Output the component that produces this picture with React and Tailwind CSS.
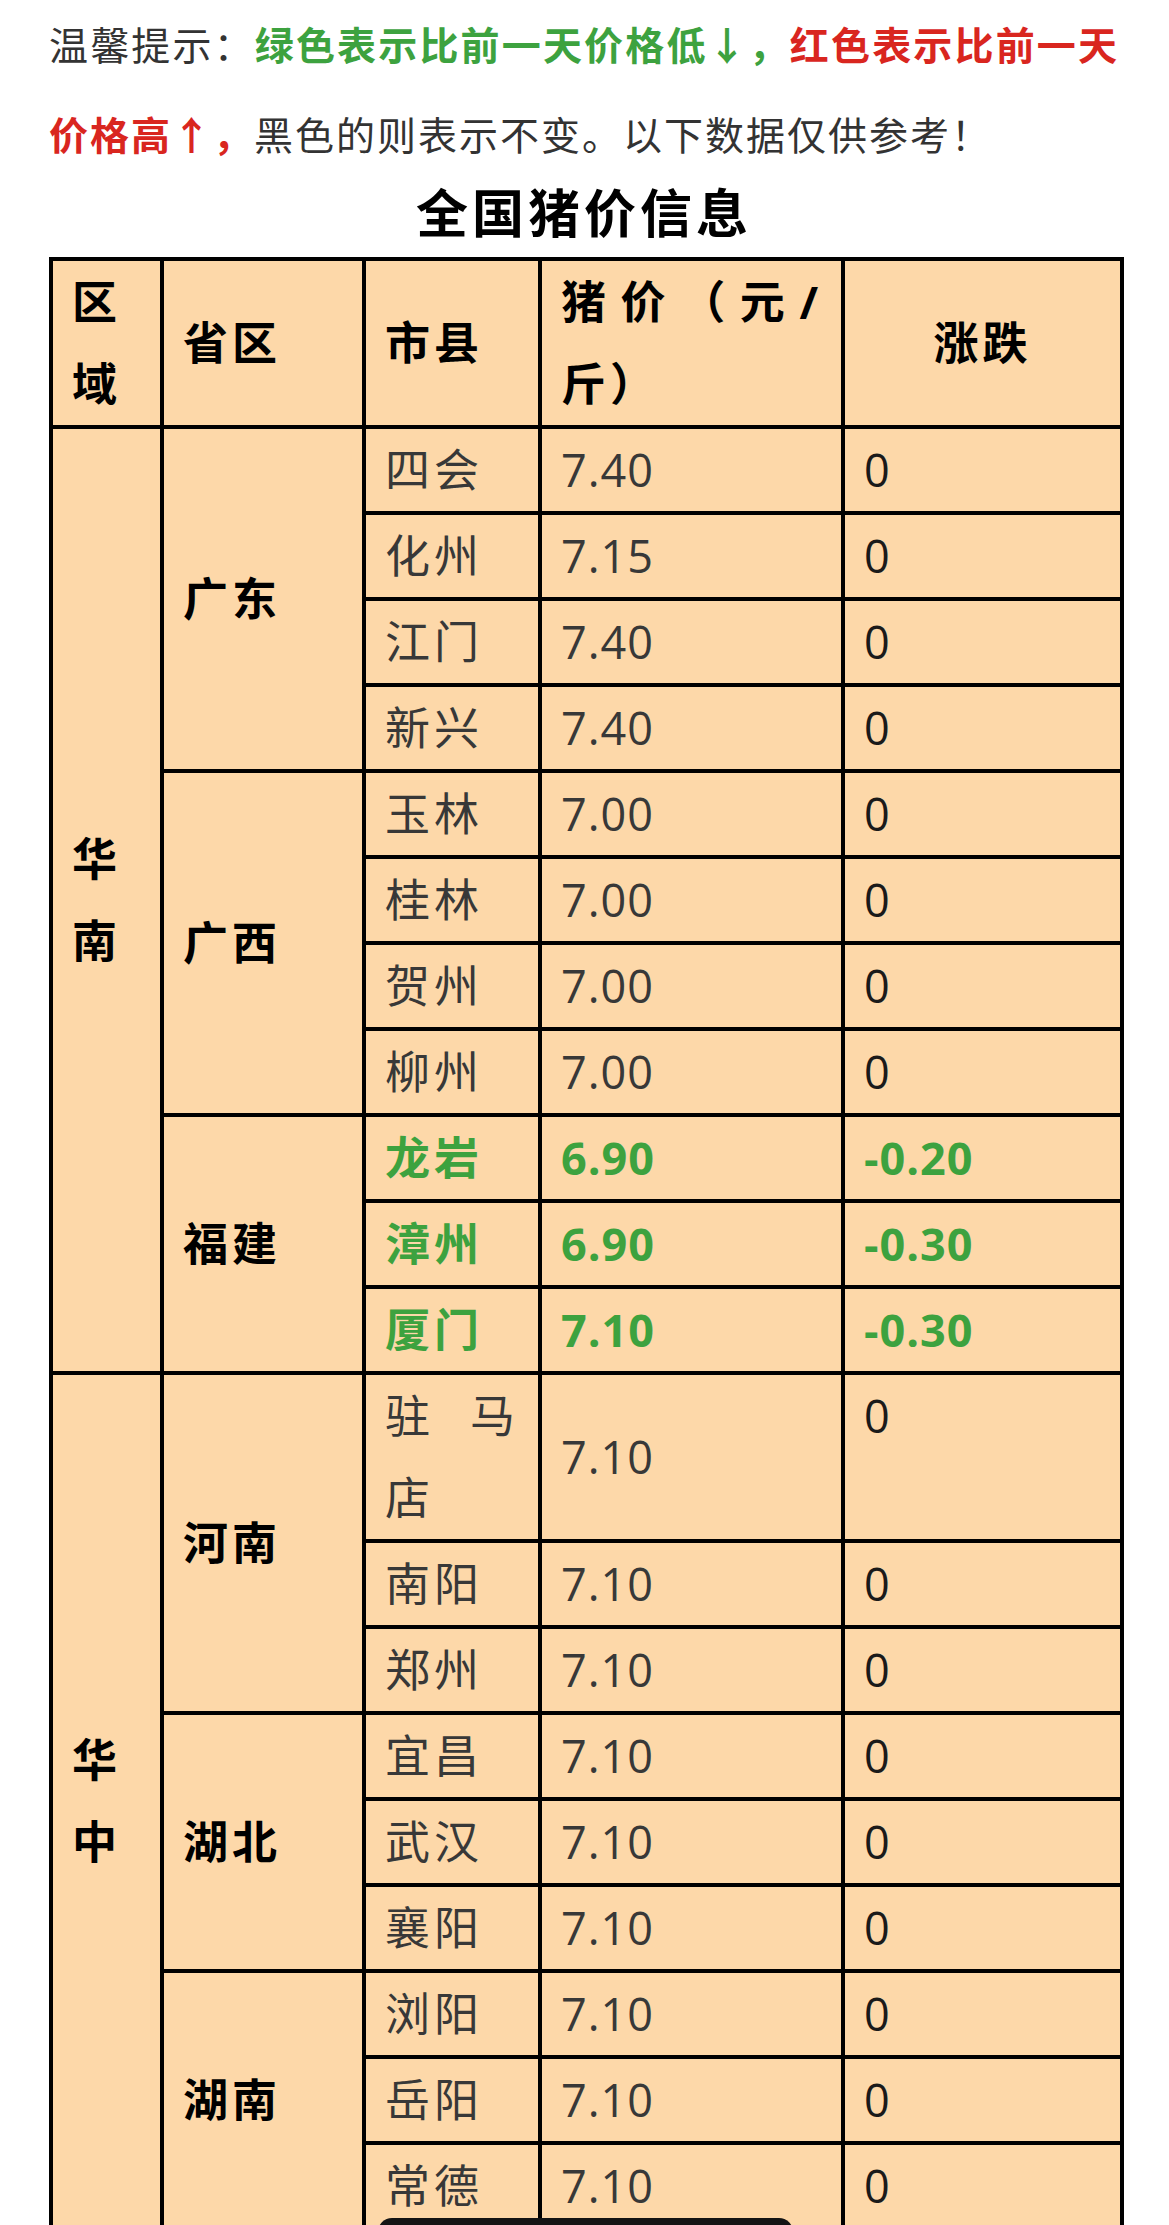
import React from 'react';

const regions = [
  {
    name: '华南',
    provinces: [
      { name: '广东', rows: [['四会', '7.40', '0'], ['化州', '7.15', '0'], ['江门', '7.40', '0'], ['新兴', '7.40', '0']] },
      { name: '广西', rows: [['玉林', '7.00', '0'], ['桂林', '7.00', '0'], ['贺州', '7.00', '0'], ['柳州', '7.00', '0']] },
      { name: '福建', rows: [['龙岩', '6.90', '-0.20', 'down'], ['漳州', '6.90', '-0.30', 'down'], ['厦门', '7.10', '-0.30', 'down']] },
    ],
  },
  {
    name: '华中',
    provinces: [
      { name: '河南', rows: [['驻马店', '7.10', '0', 'tall'], ['南阳', '7.10', '0'], ['郑州', '7.10', '0']] },
      { name: '湖北', rows: [['宜昌', '7.10', '0'], ['武汉', '7.10', '0'], ['襄阳', '7.10', '0']] },
      { name: '湖南', rows: [['浏阳', '7.10', '0'], ['岳阳', '7.10', '0'], ['常德', '7.10', '0']] },
    ],
  },
];

const cell = 'border-[4px] border-black px-[19px] py-0 leading-[82px] text-justify align-middle';

const App = () => {
  return (
    <div className="relative h-[2225px] overflow-hidden bg-white font-['Open_Sans','Noto_Sans_CJK_SC',sans-serif]">
      <div className="pl-[49px] pr-[50px]">
        {/* 提示 */}
        <p className="text-[39px] leading-[90px] tracking-[2px] text-justify text-[#333]">
          温馨提示：
          <span className="font-bold text-[#3da23f]">绿色表示比前一天价格低↓，</span>
          <span className="font-bold text-[#d9261f]">红色表示比前一天价格高↑，</span>
          黑色的则表示不变。以下数据仅供参考！
        </p>
        <h1 className="text-center text-[52px] leading-[66px] tracking-[4px] font-bold text-black mb-[11px]">
          全国猪价信息
        </h1>

        {/* 表格 */}
        <table className="table-fixed border-collapse w-[1071px] bg-[#fdd8a9] text-[45px] tracking-[4px]">
          <colgroup>
            <col className="w-[111px]" />
            <col className="w-[202px]" />
            <col className="w-[176px]" />
            <col className="w-[303px]" />
            <col className="w-[279px]" />
          </colgroup>
          <thead>
            <tr className="font-bold text-black">
              <th className={cell}>区域</th>
              <th className={cell}>省区</th>
              <th className={cell}>市县</th>
              <th className={cell}>猪价（元/斤）</th>
              <th className="border-[4px] border-black px-[19px] py-0 leading-[82px] text-center align-middle">涨跌</th>
            </tr>
          </thead>
          <tbody>
            {regions.map(region => {
              const total = region.provinces.reduce((n, p) => n + p.rows.length, 0);
              return region.provinces.map((prov, pi) =>
                prov.rows.map((row, ri) => {
                  const [city, price, change, flag] = row;
                  const down = flag === 'down';
                  const tone = down ? 'font-bold text-[#3da23f]' : 'text-[#383838]';
                  return (
                    <tr key={region.name + prov.name + city}>
                      {pi === 0 && ri === 0 && (
                        <td rowSpan={total} className={`${cell} font-bold text-black`}>{region.name}</td>
                      )}
                      {ri === 0 && (
                        <td rowSpan={prov.rows.length} className={`${cell} font-bold text-black`}>{prov.name}</td>
                      )}
                      <td className={`${cell} ${tone}`}>{city}</td>
                      <td className={`${cell} tracking-[1px] ${tone}`}>{price}</td>
                      <td
                        className={`border-[4px] border-black px-[19px] py-0 leading-[82px] tracking-[1px] ${
                          flag === 'tall' ? 'align-top' : 'align-middle'
                        } ${down ? 'font-bold text-[#3da23f]' : 'text-[#1a1a1a]'}`}
                      >
                        {change}
                      </td>
                    </tr>
                  );
                })
              );
            })}
          </tbody>
        </table>
      </div>

      {/* 底部浮条 */}
      <div className="absolute left-[378px] top-[2218px] w-[415px] h-[30px] rounded-t-[14px] bg-[#141414]" />
    </div>
  );
};

export default App;
